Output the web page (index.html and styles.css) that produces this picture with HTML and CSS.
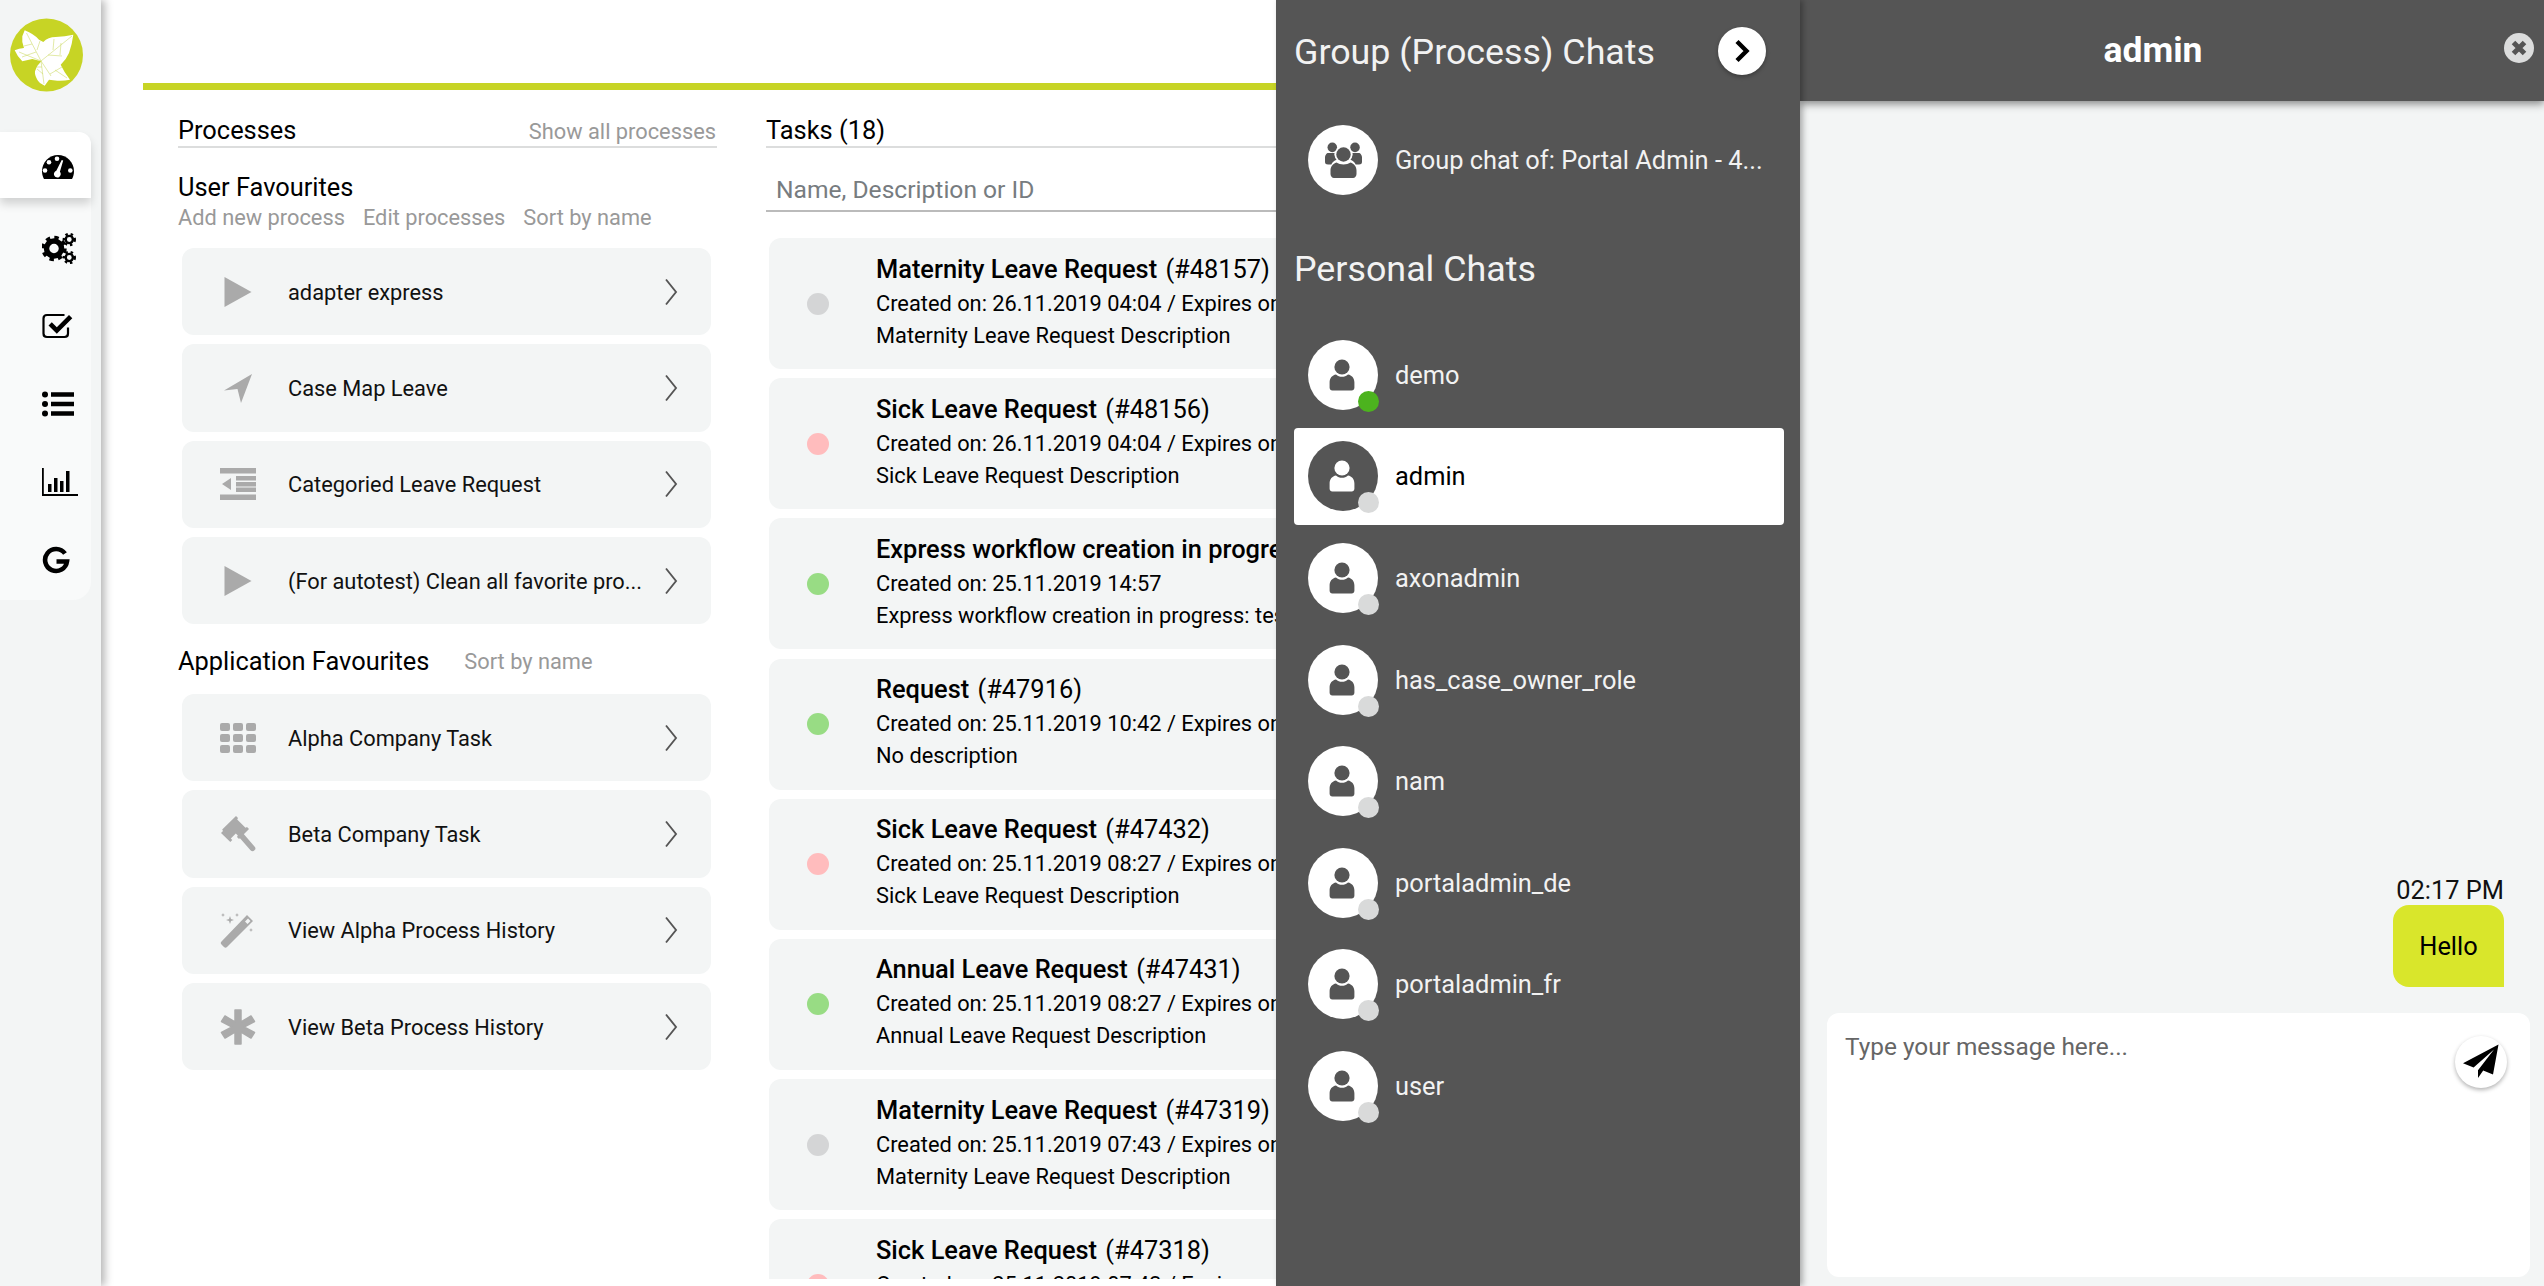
FILE: index.html
```html
<!DOCTYPE html>
<html lang="en">
<head>
<meta charset="utf-8">
<title>Portal</title>
<link rel="stylesheet" href="styles.css">
</head>
<body>
<svg class="defs" aria-hidden="true">
  <symbol id="i-user" viewBox="0 0 26 32">
    <circle cx="13" cy="8" r="7.6"/>
    <path d="M7 15.500c1.600 1.500 3.800 2.300 6 2.300s4.400-.8 6-2.300c3.800.6 6.400 3.700 6.400 8v5.200c0 1.500-1.200 2.700-2.700 2.700H3.300c-1.500 0-2.700-1.200-2.700-2.700v-5.200c0-4.300 2.600-7.400 6.400-8z"/>
  </symbol>
  <symbol id="i-chev" viewBox="0 0 14 28"><path d="M2 1.500 12 14 2 26.500" fill="none" stroke="#555" stroke-width="1.900"/></symbol>
  <symbol id="i-play" viewBox="0 0 36 36"><path d="M4.500 3v30l27-15z"/></symbol>
</svg>

<aside class="sidebar">
  <div class="logo">
    <svg viewBox="0 0 73 74" width="73" height="74">
      <circle cx="36.500" cy="37" r="36.500" fill="#c7d425"/>
      <path fill="#fff" d="M14.700 12.300Q24 16 29 21.700L33.300 24Q38 19 45.700 19 55 18.500 63.300 16.700 62 27 59 35 56 42 50.700 46.700 54 54 60 61.700 54 63 47.300 62.700L39 61.700 34.700 67.700Q29 65 27.300 61.700 24.500 57 25 53.300 27 47 31.300 43.300L22.300 41 12.300 43.300Q7 38 4.700 32.300 9 30.500 14 30 11.500 24 12.300 18.300z"/>
      <path fill="none" stroke="#cfdb6c" stroke-width=".6" d="M31 43 16.500 15M22 26l-8 2M26 34l-14 5M31 43 9 34M27 32 30 23M31 43 62 18M43 32l1-11M51 25l-1 12M38 37l14 1M31 43l10 15M40 56l12-7M45 52l12 8M31 43l3 23M33 56l-6-5M32 49l-5 0"/>
    </svg>
  </div>
  <nav class="menu">
    <a class="menu-item active">
      <svg viewBox="0 0 32 24" width="32" height="24">
        <path d="M16 0C7.200 0 0 7.300 0 16.300c0 2.800.7 5.400 2 7.700h28c1.300-2.300 2-4.900 2-7.700C32 7.300 24.800 0 16 0z"/>
        <g fill="#fff">
          <circle cx="15" cy="3.800" r="2.300"/><circle cx="7" cy="7.200" r="2.300"/><circle cx="3" cy="15.500" r="2.300"/><circle cx="28.300" cy="15.500" r="2.300"/>
          <path d="M21.200 5.500 17.900 16.800a3.400 3.400 0 1 1-3.600-1L19.700 5z"/>
        </g>
      </svg>
    </a>
    <a class="menu-item">
      <svg viewBox="0 -1 35 32" width="35" height="32">
        <g fill="none" stroke="#000">
          <circle cx="12" cy="15.500" r="7.500" stroke-width="5.500"/>
          <circle cx="12" cy="15.500" r="11" stroke-width="3.400" stroke-dasharray="4.400 4.240"/>
          <circle cx="27.300" cy="6.500" r="3.600" stroke-width="2.400"/>
          <circle cx="27.300" cy="6.500" r="5.500" stroke-width="2.400" stroke-dasharray="2.400 2.920"/>
          <circle cx="27.300" cy="24.500" r="3.600" stroke-width="2.400"/>
          <circle cx="27.300" cy="24.500" r="5.500" stroke-width="2.400" stroke-dasharray="2.400 2.920"/>
        </g>
      </svg>
    </a>
    <a class="menu-item">
      <svg viewBox="0 0 32 26" width="32" height="26"><path d="M26 14.500v6c0 2-1.500 3.500-3.500 3.500H5c-2 0-3.500-1.500-3.500-3.500V5.500C1.500 3.500 3 2 5 2h17.500" fill="none" stroke="#000" stroke-width="2.200"/><path d="M6.500 12.500l3.300-3.300 5 5L27 2l3.300 3.300-15.500 15.500z"/></svg>
    </a>
    <a class="menu-item">
      <svg viewBox="0 0 32 26" width="32" height="26"><circle cx="3" cy="3.500" r="3"/><circle cx="3" cy="13" r="3"/><circle cx="3" cy="22.500" r="3"/><path d="M9 1.200h23v4.500H9zM9 10.700h23v4.500H9zM9 20.200h23v4.500H9z"/></svg>
    </a>
    <a class="menu-item">
      <svg viewBox="0 0 36 28" width="36" height="28"><path d="M0 0h1.800v26H36v2H0z"/><path d="M6 16h3.500v8H6zM12 10h3.500v14H12zM18 13h3.500v11H18zM24 3h3.500v21H24z"/></svg>
    </a>
    <a class="menu-item">
      <svg viewBox="0 0 28 28" width="28" height="28"><path d="M23 7.500A11 11 0 1 0 25 15.500H14.500" fill="none" stroke="#000" stroke-width="4.600"/></svg>
    </a>
  </nav>
</aside>

<main class="main">
  <div class="accent"></div>
  <div class="columns">
    <section class="processes">
      <header class="col-head">
        <h2 class="col-title">Processes</h2>
        <a class="link">Show all processes</a>
      </header>
      <h3 class="group-title">User Favourites</h3>
      <div class="links">
        <a class="link">Add new process</a>
        <a class="link">Edit processes</a>
        <a class="link">Sort by name</a>
      </div>
      <ul class="cards">
        <li class="card">
          <svg class="card-icon" width="36" height="36"><use href="#i-play"/></svg>
          <span class="card-name">adapter express</span>
          <svg class="chev"><use href="#i-chev"/></svg>
        </li>
        <li class="card">
          <svg class="card-icon" viewBox="0 0 36 36" width="36" height="36"><path d="M32 4 21 33l-3.500-14L4 20.500z"/></svg>
          <span class="card-name">Case Map Leave</span>
          <svg class="chev"><use href="#i-chev"/></svg>
        </li>
        <li class="card">
          <svg class="card-icon" viewBox="0 0 36 36" width="36" height="36"><path d="M0 2h36v5.500H0zM0 28.500h36V34H0zM16 10h20v4.500H16zM16 15.900h20v4.500H16zM16 21.500h20v4.500H16zM11 12v12L2 18z"/></svg>
          <span class="card-name">Categoried Leave Request</span>
          <svg class="chev"><use href="#i-chev"/></svg>
        </li>
        <li class="card">
          <svg class="card-icon" width="36" height="36"><use href="#i-play"/></svg>
          <span class="card-name">(For autotest) Clean all favorite pro...</span>
          <svg class="chev"><use href="#i-chev"/></svg>
        </li>
      </ul>
      <div class="app-head">
        <h3 class="group-title flat">Application Favourites</h3>
        <a class="link">Sort by name</a>
      </div>
      <ul class="cards">
        <li class="card">
          <svg class="card-icon" viewBox="0 0 36 36" width="36" height="36"><g><rect x="0" y="3" width="10" height="8" rx="2"/><rect x="13" y="3" width="10" height="8" rx="2"/><rect x="26" y="3" width="10" height="8" rx="2"/><rect x="0" y="14" width="10" height="8" rx="2"/><rect x="13" y="14" width="10" height="8" rx="2"/><rect x="26" y="14" width="10" height="8" rx="2"/><rect x="0" y="25" width="10" height="8" rx="2"/><rect x="13" y="25" width="10" height="8" rx="2"/><rect x="26" y="25" width="10" height="8" rx="2"/></g></svg>
          <span class="card-name">Alpha Company Task</span>
          <svg class="chev"><use href="#i-chev"/></svg>
        </li>
        <li class="card">
          <svg class="card-icon" viewBox="0 0 36 36" width="36" height="36"><path d="M16 0l2 2-.8 1.500 8.300 8.300 1.500-.8 2 2-10 10-2-2 .8-1.500-2-2-5 5 1.500 1.500-2 2L1 17l2-2-.8-1.500z"/><path d="M18 20l4-4 12.500 14.500c1.300 1.500 1.300 2.500 0 3.800s-2.700 1.200-4 0z"/></svg>
          <span class="card-name">Beta Company Task</span>
          <svg class="chev"><use href="#i-chev"/></svg>
        </li>
        <li class="card">
          <svg class="card-icon" viewBox="0 0 36 36" width="36" height="36"><path d="M27 3l6 6L7 35c-1 1-2 1-3 0l-2.500-2.500c-1-1-1-2 0-3zM25 9.500l2.500 2.500 3-3L28 6.500z"/><path d="M10 4l1 3 3 1-3 1-1 3-1-3-3-1 3-1zM3 1l.6 1.400L5 3l-1.400.6L3 5l-.6-1.400L1 3l1.400-.6zM17 1l.6 1.400L19 3l-1.400.6L17 5l-.6-1.400L15 3l1.400-.6zM31 16l.6 1.400L33 18l-1.400.6L31 20l-.6-1.400L29 18l1.400-.6z"/></svg>
          <span class="card-name">View Alpha Process History</span>
          <svg class="chev"><use href="#i-chev"/></svg>
        </li>
        <li class="card">
          <svg class="card-icon" viewBox="0 0 36 36" width="36" height="36"><path d="M15 1h6v12l10-6 3.500 5.500L24 18l10.500 5.500L31 29l-10-6v12h-6V23L5 29l-3.500-5.500L12 18 1.500 12.500 5 7l10 6z" stroke="#aaa" stroke-width="1.500" stroke-linejoin="round"/></svg>
          <span class="card-name">View Beta Process History</span>
          <svg class="chev"><use href="#i-chev"/></svg>
        </li>
      </ul>
    </section>

    <section class="tasks">
      <header class="col-head">
        <h2 class="col-title">Tasks (18)</h2>
      </header>
      <input class="search" type="text" placeholder="Name, Description or ID">
      <ul class="task-list">
        <li class="task"><span class="dot grey"></span><div class="task-body"><p class="task-title"><b>Maternity Leave Request</b> (#48157)</p><p class="task-line">Created on: 26.11.2019 04:04 / Expires on: 30.11.2019 04:04</p><p class="task-line">Maternity Leave Request Description</p></div></li>
        <li class="task"><span class="dot red"></span><div class="task-body"><p class="task-title"><b>Sick Leave Request</b> (#48156)</p><p class="task-line">Created on: 26.11.2019 04:04 / Expires on: 30.11.2019 04:04</p><p class="task-line">Sick Leave Request Description</p></div></li>
        <li class="task"><span class="dot green"></span><div class="task-body"><p class="task-title"><b>Express workflow creation in progress</b></p><p class="task-line">Created on: 25.11.2019 14:57</p><p class="task-line">Express workflow creation in progress: test</p></div></li>
        <li class="task"><span class="dot green"></span><div class="task-body"><p class="task-title"><b>Request</b> (#47916)</p><p class="task-line">Created on: 25.11.2019 10:42 / Expires on: 30.11.2019 10:42</p><p class="task-line">No description</p></div></li>
        <li class="task"><span class="dot red"></span><div class="task-body"><p class="task-title"><b>Sick Leave Request</b> (#47432)</p><p class="task-line">Created on: 25.11.2019 08:27 / Expires on: 30.11.2019 08:27</p><p class="task-line">Sick Leave Request Description</p></div></li>
        <li class="task"><span class="dot green"></span><div class="task-body"><p class="task-title"><b>Annual Leave Request</b> (#47431)</p><p class="task-line">Created on: 25.11.2019 08:27 / Expires on: 30.11.2019 08:27</p><p class="task-line">Annual Leave Request Description</p></div></li>
        <li class="task"><span class="dot grey"></span><div class="task-body"><p class="task-title"><b>Maternity Leave Request</b> (#47319)</p><p class="task-line">Created on: 25.11.2019 07:43 / Expires on: 30.11.2019 07:43</p><p class="task-line">Maternity Leave Request Description</p></div></li>
        <li class="task"><span class="dot red"></span><div class="task-body"><p class="task-title"><b>Sick Leave Request</b> (#47318)</p><p class="task-line">Created on: 25.11.2019 07:43 / Expires on: 30.11.2019 07:43</p><p class="task-line">Sick Leave Request Description</p></div></li>
      </ul>
    </section>
  </div>
</main>

<aside class="contacts">
  <div class="contacts-head">
    <h2 class="contacts-title">Group (Process) Chats</h2>
    <button class="collapse" type="button" aria-label="Collapse">
      <svg viewBox="0 0 16 24" width="16" height="24"><path d="M3 2.500 12.500 12 3 21.500" fill="none" stroke="#000" stroke-width="4.400"/></svg>
    </button>
  </div>
  <div class="contact group-chat">
    <span class="avatar">
      <svg viewBox="0 0 37 36" width="37" height="36" fill="#555">
        <circle cx="7.300" cy="5.400" r="4.800"/><circle cx="30" cy="5.400" r="4.800"/>
        <path d="M2.500 11h7c-.3 2.600.6 5 2.500 6.500-3 1.200-5 3-5.600 5H3c-1.800 0-3-.8-3-2.500v-4.500c0-2 1-3.500 2.500-4.500zM34.500 11h-7c.3 2.600-.6 5-2.500 6.500 3 1.200 5 3 5.600 5H34c1.800 0 3-.8 3-2.500v-4.500c0-2-1-3.500-2.500-4.500z"/>
        <circle cx="18.500" cy="12.500" r="8.800" fill="#fff"/>
        <circle cx="18.500" cy="12.500" r="7.200"/>
        <path d="M11.500 20.500c1.800 1.300 4.300 2 7 2s5.200-.7 7-2c3.600 1.100 6 4 6 8v3.500c0 2.300-1.500 4-3.500 4H9c-2 0-3.500-1.700-3.500-4v-3.500c0-4 2.400-6.900 6-8z"/>
      </svg>
    </span>
    <span class="contact-name">Group chat of: Portal Admin - 4...</span>
  </div>
  <h2 class="contacts-title personal">Personal Chats</h2>
  <ul class="people">
    <li class="contact"><span class="avatar"><svg class="user"><use href="#i-user"/></svg><i class="status online"></i></span><span class="contact-name">demo</span></li>
    <li class="contact selected"><span class="avatar"><svg class="user"><use href="#i-user"/></svg><i class="status"></i></span><span class="contact-name">admin</span></li>
    <li class="contact"><span class="avatar"><svg class="user"><use href="#i-user"/></svg><i class="status"></i></span><span class="contact-name">axonadmin</span></li>
    <li class="contact"><span class="avatar"><svg class="user"><use href="#i-user"/></svg><i class="status"></i></span><span class="contact-name">has_case_owner_role</span></li>
    <li class="contact"><span class="avatar"><svg class="user"><use href="#i-user"/></svg><i class="status"></i></span><span class="contact-name">nam</span></li>
    <li class="contact"><span class="avatar"><svg class="user"><use href="#i-user"/></svg><i class="status"></i></span><span class="contact-name">portaladmin_de</span></li>
    <li class="contact"><span class="avatar"><svg class="user"><use href="#i-user"/></svg><i class="status"></i></span><span class="contact-name">portaladmin_fr</span></li>
    <li class="contact"><span class="avatar"><svg class="user"><use href="#i-user"/></svg><i class="status"></i></span><span class="contact-name">user</span></li>
  </ul>
</aside>

<section class="chat">
  <header class="chat-head">
    <h2 class="chat-title">admin</h2>
    <button class="close" type="button" aria-label="Close">
      <svg viewBox="0 0 30 30" width="30" height="30"><circle cx="15" cy="15" r="15" fill="#dcdddd"/><path d="M9.500 9.500l11 11M20.500 9.500l-11 11" stroke="#555" stroke-width="5"/></svg>
    </button>
  </header>
  <div class="messages">
    <div class="time">02:17 PM</div>
    <div class="bubble">Hello</div>
  </div>
  <div class="composer">
    <textarea class="composer-input" placeholder="Type your message here..."></textarea>
    <button class="send" type="button" aria-label="Send">
      <svg viewBox="0 0 36 36" width="36" height="36"><path d="M35.500.5 30 30.500l-9.800-4-5.200 7.500v-7.800L31 5.500 10.600 23.500 0 19.200z"/></svg>
    </button>
  </div>
</section>
</body>
</html>
```
FILE: styles.css
```css
* { box-sizing: border-box; }
html, body { height: 100%; margin: 0; }
body {
  display: flex;
  overflow: hidden;
  background: #fff;
  color: #000;
  font-family: Roboto, "Liberation Sans", sans-serif;
}
ul { list-style: none; margin: 0; padding: 0; }
h2, h3, p { margin: 0; font-weight: 400; }
button { border: 0; padding: 0; cursor: pointer; }
.defs { display: none; }

/* Sidebar */
.sidebar {
  flex: 0 0 101px;
  position: relative;
  z-index: 2;
  background: #f3f5f5;
  box-shadow: 4px 0 8px rgba(0, 0, 0, .28);
}
.logo { margin: 18px 0 0 10px; height: 74px; }
.logo svg { display: block; }
.menu {
  width: 91px;
  margin-top: 40px;
  padding-bottom: 1px;
  background: #f9fafa;
  border-radius: 0 18px 18px 0;
}
.menu-item {
  display: flex;
  height: 78px;
  align-items: center;
  padding-left: 42px;
}
.menu-item.active {
  height: 66px;
  margin-bottom: 11px;
  background: #fff;
  border-radius: 0 12px 0 0;
  box-shadow: 0 6px 10px rgba(0, 0, 0, .16);
  padding-top: 4px;
}

/* Main area */
.main {
  flex: 1;
  min-width: 0;
  overflow: hidden;
  padding: 83px 0 7px 42px;
  height: 100%;
}
.accent { height: 7px; background: #c7d425; }
.columns { display: flex; height: calc(100% - 7px); }
.processes { flex: 0 0 539px; margin-left: 35px; }
.tasks { flex: 0 0 900px; margin-left: 49px; min-height: 0; display: flex; flex-direction: column; }
.col-head {
  display: flex;
  flex: none;
  height: 38px;
  margin-top: 20px;
  justify-content: space-between;
  align-items: center;
  border-bottom: 2px solid #dcdddd;
}
.col-title { font-size: 25.400px; line-height: 38px; padding-top: 4px; }
.link { color: #999; font-size: 21.800px; white-space: nowrap; }
.col-head .link { margin-right: 1px; padding-top: 6px; }
.group-title { margin-top: 24px; font-size: 25.400px; line-height: 30px; }
.group-title.flat { margin: 0; }
.links { display: flex; gap: 18px; height: 46px; padding-top: 4px; line-height: 24px; }
.cards { display: flex; flex-direction: column; gap: 9px; margin-left: 4px; width: 529px; }
.card {
  display: flex;
  align-items: center;
  height: 87.300px;
  background: #f3f5f5;
  border-radius: 12px;
  padding: 0 33px 0 38px;
  font-size: 21.800px;
}
.card-icon { flex: none; fill: #aaa; margin-right: 32px; }
.card-name { flex: 1; white-space: nowrap; color: #111; padding-top: 1px; }
.chev { flex: none; width: 14px; height: 30px; fill: none; }
.app-head { display: flex; align-items: center; gap: 35px; height: 30px; margin: 22px 0 18px; }

/* Tasks */
.search {
  flex: none;
  width: 100%;
  height: 42px;
  margin-top: 22px;
  padding: 0 10px 2px;
  border: 0;
  border-bottom: 2px solid #bbb;
  background: none;
  outline: none;
  font: 24.600px Roboto, sans-serif;
}
.search::placeholder { color: #777c80; opacity: 1; }
.task-list {
  flex: 1;
  min-height: 0;
  overflow: hidden;
  margin: 26px 0 0 3px;
  display: flex;
  flex-direction: column;
  gap: 9.200px;
}
.task {
  flex: none;
  display: flex;
  align-items: center;
  height: 131px;
  background: #f3f5f5;
  border-radius: 12px;
  padding: 0 0 4px 38px;
}
.dot { flex: none; width: 22px; height: 22px; border-radius: 50%; margin: 4px 47px 0 0; }
.dot.grey { background: #d4d5d6; }
.dot.red { background: #ffbcbd; }
.dot.green { background: #98dc84; }
.task-title { font-size: 25.400px; line-height: 34px; margin-bottom: 2px; white-space: nowrap; }
.task-title b { font-weight: 500; margin-right: 2px; }
.task-line { font-size: 21.800px; line-height: 32px; white-space: nowrap; }

/* Contacts */
.contacts {
  flex: 0 0 524px;
  position: relative;
  z-index: 1;
  background: #555;
  color: #f2f2f2;
  padding-left: 18px;
  box-shadow: 3px 0 6px rgba(0, 0, 0, .3);
}
.contacts-head {
  display: flex;
  align-items: center;
  justify-content: space-between;
  height: 102px;
  padding-right: 34px;
}
.contacts-title { font-size: 35.800px; line-height: 44px; white-space: nowrap; padding-top: 2px; }
.contacts-title.personal { margin: 27px 0 35px; }
.collapse {
  display: flex;
  align-items: center;
  justify-content: center;
  width: 48px;
  height: 48px;
  border-radius: 50%;
  background: #fff;
  box-shadow: 0 2px 4px rgba(0, 0, 0, .3);
}
.contact {
  display: flex;
  align-items: center;
  gap: 17px;
  width: 490px;
  height: 97.600px;
  padding-left: 14px;
  font-size: 25.400px;
  white-space: nowrap;
}
.group-chat { height: 116px; }
.people { display: flex; flex-direction: column; gap: 4px; }
.contact.selected { background: #fff; color: #000; border-radius: 4px; }
.avatar {
  position: relative;
  flex: none;
  display: flex;
  align-items: center;
  justify-content: center;
  width: 70px;
  height: 70px;
  border-radius: 50%;
  background: #fff;
}
.user { width: 26px; height: 32px; fill: #555; margin-right: 2px; }
.selected .avatar { background: #555; }
.selected .user { fill: #fff; }
.status {
  position: absolute;
  right: -1px;
  bottom: -2px;
  width: 21px;
  height: 21px;
  border-radius: 50%;
  background: #d9dada;
}
.status.online { background: #4cb31e; }

/* Chat */
.chat {
  flex: 0 0 744px;
  display: flex;
  flex-direction: column;
  background: #f3f5f5;
}
.chat-head {
  position: relative;
  flex: none;
  height: 101px;
  display: flex;
  align-items: center;
  justify-content: center;
  background: #555;
  color: #fff;
  box-shadow: 0 3px 8px rgba(0, 0, 0, .45);
}
.chat-title { font-size: 35.500px; font-weight: 700; padding: 0 38px 2px 0; }
.close {
  position: absolute;
  top: 33px;
  right: 10px;
  display: flex;
  background: none;
}
.messages {
  flex: 1;
  display: flex;
  flex-direction: column;
  align-items: flex-end;
  justify-content: flex-end;
  padding-right: 40px;
}
.time { font-size: 25.400px; line-height: 30px; color: #111; }
.bubble {
  width: 111px;
  height: 82px;
  display: flex;
  align-items: center;
  justify-content: center;
  background: #d9e62b;
  border-radius: 16px 16px 0 16px;
  font-size: 25.400px;
}
.composer {
  position: relative;
  flex: none;
  height: 264px;
  margin: 26px 14px 9px 27px;
  background: #fff;
  border-radius: 12px;
}
.composer-input {
  display: block;
  width: 100%;
  height: 100%;
  padding: 19px 18px;
  border: 0;
  background: none;
  outline: none;
  resize: none;
  font: 24.400px/1.2 Roboto, sans-serif;
}
.composer-input::placeholder { color: #666; opacity: 1; }
.send {
  position: absolute;
  top: 23px;
  right: 23px;
  display: flex;
  align-items: center;
  justify-content: center;
  width: 52px;
  height: 52px;
  border-radius: 50%;
  background: #fff;
  box-shadow: 0 2px 4px rgba(0, 0, 0, .3);
}
```
